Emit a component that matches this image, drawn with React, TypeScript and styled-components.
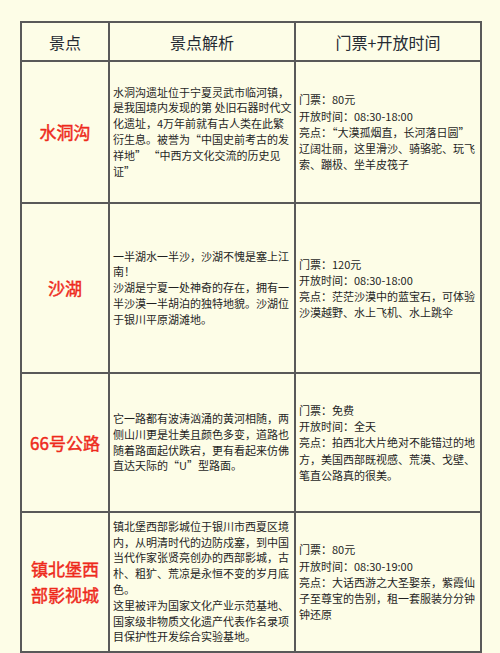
import React from 'react';
import styled, { createGlobalStyle } from 'styled-components';

const GlobalStyle = createGlobalStyle`
    html, body {
        margin: 0;
        padding: 0;
        background-color: #fdfde7;
    }
    body {
        font-family: "Noto Sans CJK SC", "Noto Sans", sans-serif;
        color: #222;
    }
`;

const Page = styled.div`
    width: 500px;
    height: 653px;
    padding: 21px 0 0 20px;
    box-sizing: border-box;
    overflow: hidden;
`;

const Table = styled.table`
    border-collapse: collapse;
    table-layout: fixed;
    width: 460px;
`;

const Row = styled.tr<{ $h: number }>`
    height: ${({ $h }) => $h}px;
`;

const HeadCell = styled.th`
    border: 2px solid #595959;
    font-size: 16px;
    font-weight: 400;
    color: #262b33;
    text-align: center;
    vertical-align: middle;
    padding: 0;
`;

const NameCell = styled.td`
    border: 2px solid #595959;
    color: #ee2a1c;
    font-size: 17px;
    font-weight: 400;
    -webkit-text-stroke: 0.45px #ee2a1c;
    line-height: 26px;
    text-align: center;
    vertical-align: middle;
    padding: 0 6px;
`;

const TextCell = styled.td<{ $lh: number }>`
    border: 2px solid #595959;
    font-size: 11px;
    line-height: ${({ $lh }) => $lh}px;
    text-align: left;
    vertical-align: middle;
    padding: 0 0 0 3px;
    color: #1f1f1f;
`;

const Line = styled.div``;

interface Spot {
    name: string,
    about: string[],
    ticket: string[],
    height: number,
}

const spots: Spot[] = [
    {
        name: '水洞沟',
        about: ['水洞沟遗址位于宁夏灵武市临河镇，是我国境内发现的第 处旧石器时代文化遗址，4万年前就有古人类在此繁衍生息。被誉为“中国史前考古的发祥地” “中西方文化交流的历史见证”'],
        ticket: ['门票：80元', '开放时间：08:30-18:00', '亮点：“大漠孤烟直，长河落日圆”辽阔壮丽，这里滑沙、骑骆驼、玩飞索、蹦极、坐羊皮筏子'],
        height: 142,
    },
    {
        name: '沙湖',
        about: ['一半湖水一半沙，沙湖不愧是塞上江南！', '沙湖是宁夏一处神奇的存在，拥有一半沙漠一半胡泊的独特地貌。沙湖位于银川平原湖滩地。'],
        ticket: ['门票：120元', '开放时间：08:30-18:00', '亮点：茫茫沙漠中的蓝宝石，可体验沙漠越野、水上飞机、水上跳伞'],
        height: 170,
    },
    {
        name: '66号公路',
        about: ['它一路都有波涛汹涌的黄河相随，两侧山川更是壮美且颜色多变，道路也随着路面起伏跌宕，更有看起来仿佛直达天际的“U”型路面。'],
        ticket: ['门票：免费', '开放时间：全天', '亮点：拍西北大片绝对不能错过的地方，美国西部既视感、荒漠、戈壁、笔直公路真的很美。'],
        height: 139,
    },
    {
        name: '镇北堡西部影视城',
        about: ['镇北堡西部影城位于银川市西夏区境内，从明清时代的边防戍塞，到中国当代作家张贤亮创办的西部影城，古朴、粗犷、荒凉是永恒不变的岁月底色。', '这里被评为国家文化产业示范基地、国家级非物质文化遗产代表作名录项目保护性开发综合实验基地。'],
        ticket: ['门票：80元', '开放时间：08:30-19:00', '亮点：大话西游之大圣娶亲，紫霞仙子至尊宝的告别，租一套服装分分钟钟还原'],
        height: 140,
    },
];

export default function App() {
    return <>
        <GlobalStyle />
        <Page>
            <Table lang="zh-CN">
                <colgroup>
                    <col style={{ width: 88 }} />
                    <col style={{ width: 186 }} />
                    <col style={{ width: 186 }} />
                </colgroup>
                <thead>
                    <Row $h={39}>
                        <HeadCell>景点</HeadCell>
                        <HeadCell>景点解析</HeadCell>
                        <HeadCell>门票+开放时间</HeadCell>
                    </Row>
                </thead>
                <tbody>
                    {spots.map(spot => (
                        <Row $h={spot.height} key={spot.name}>
                            <NameCell>{spot.name}</NameCell>
                            <TextCell $lh={15.8}>
                                {spot.about.map((p, i) => <Line key={i}>{p}</Line>)}
                            </TextCell>
                            <TextCell $lh={16.2}>
                                {spot.ticket.map((p, i) => <Line key={i}>{p}</Line>)}
                            </TextCell>
                        </Row>
                    ))}
                </tbody>
            </Table>
        </Page>
    </>
}
